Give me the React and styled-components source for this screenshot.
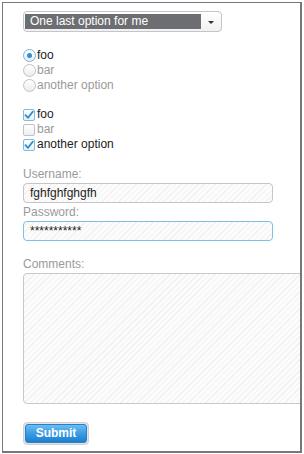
import React from "react";
import styled, { createGlobalStyle, css } from "styled-components";

const Global = createGlobalStyle`
  html, body { margin: 0; padding: 0; background: #fff; }
  body { font-family: "Liberation Sans", Arial, sans-serif; font-size: 12px; }
  * { box-sizing: border-box; }
`;

const Frame = styled.div`
  margin: 2px 0 0 2px;
  width: 300px;
  height: 451px;
  border: 1px solid #77777d;
  border-right-width: 2px;
  border-bottom-width: 2px;
  overflow: hidden;
  padding: 8px 0 0 20px;
  display: flex;
  flex-direction: column;
  align-items: flex-start;
`;

const stripes = css`
  background: repeating-linear-gradient(
    135deg,
    #fcfcfc 0px,
    #fcfcfc 3px,
    #f1f1f1 3px,
    #f1f1f1 4px
  );
`;

const Select = styled.div`
  width: 199px;
  height: 21px;
  border: 1px solid #c4c4c9;
  border-radius: 4px;
  background: linear-gradient(#ffffff, #f1f1f3);
  display: flex;
  align-items: stretch;
  padding: 2px 0 2px 1px;
`;

const SelectValue = styled.div`
  flex: 1;
  background: #6d6e72;
  color: #fff;
  font-size: 12px;
  line-height: 15px;
  padding-left: 5px;
  white-space: nowrap;
`;

const SelectArrow = styled.div`
  width: 20px;
  display: flex;
  align-items: center;
  justify-content: center;
  &::after {
    content: "";
    border-left: 3px solid transparent;
    border-right: 3px solid transparent;
    border-top: 3px solid #333;
    margin-top: 1px;
  }
`;

const Group = styled.div`
  display: flex;
  flex-direction: column;
  margin-top: ${(p) => p.$mt}px;
`;

const Option = styled.label`
  display: flex;
  align-items: center;
  height: 15px;
  line-height: 15px;
  font-size: 12px;
  color: ${(p) => (p.$dim ? "#9a9a9a" : "#222")};
  white-space: nowrap;
`;

const Radio = styled.span`
  width: 13px;
  height: 13px;
  border-radius: 50%;
  margin-right: 1px;
  border: 1px solid ${(p) => (p.$on ? "#72b6dd" : "#c2c2c6")};
  background: linear-gradient(#ffffff, #ececef);
  display: flex;
  align-items: center;
  justify-content: center;
  &::after {
    content: "";
    display: ${(p) => (p.$on ? "block" : "none")};
    width: 5px;
    height: 5px;
    border-radius: 50%;
    background: #2f8fd0;
  }
`;

const Check = styled.span`
  width: 12px;
  height: 12px;
  border-radius: 2px;
  margin-right: 2px;
  border: 1px solid ${(p) => (p.$on ? "#7dbde2" : "#c2c2c6")};
  background: linear-gradient(#ffffff, #eeeef1);
  display: flex;
  align-items: center;
  justify-content: center;
`;

const Tick = () => (
  <svg width="10" height="10" viewBox="0 0 10 10">
    <path d="M1.5 5.2 L4 7.8 L8.8 1.6" fill="none" stroke="#2c8ed0" strokeWidth="1.8" strokeLinecap="round" strokeLinejoin="round" />
  </svg>
);

const FieldLabel = styled.div`
  font-size: 12px;
  line-height: 18px;
  color: #9a9a9a;
  margin-top: ${(p) => p.$mt || 0}px;
`;

const TextInput = styled.div`
  width: 250px;
  height: 20px;
  border: 1px solid ${(p) => (p.$focus ? "#7cc0e2" : "#c4c4c9")};
  border-radius: 4px;
  ${stripes};
  padding-left: 6px;
  font-size: 12px;
  line-height: 18px;
  color: #222;
`;

const TextArea = styled.div`
  width: 300px;
  height: 131px;
  flex-shrink: 0;
  border: 1px solid #c8c8cd;
  border-radius: 4px;
  ${stripes};
`;

const SubmitButton = styled.button`
  margin-top: 18px;
  width: 66px;
  height: 23px;
  padding: 0;
  border: 1px solid #d0d0d4;
  border-radius: 4px;
  background: #e4e4e6;
  display: flex;
  align-items: stretch;
  justify-content: stretch;
  cursor: pointer;
  span {
    flex: 1;
    margin: 1px;
    border-radius: 3px;
    border: 1px solid #2a7fc0;
    background: linear-gradient(#6cbdf2 0%, #3e9fe6 45%, #1c7fcf 100%);
    color: #fff;
    font-family: "Liberation Sans", Arial, sans-serif;
    font-weight: bold;
    font-size: 12px;
    line-height: 17px;
    text-align: center;
  }
`;

export default function App() {
  return (
    <>
      <Global />
      <Frame>
        <Select>
          <SelectValue>One last option for me</SelectValue>
          <SelectArrow />
        </Select>

        <Group $mt={16}>
          <Option><Radio $on />foo</Option>
          <Option $dim><Radio />bar</Option>
          <Option $dim><Radio />another option</Option>
        </Group>

        <Group $mt={14}>
          <Option><Check $on><Tick /></Check>foo</Option>
          <Option $dim><Check />bar</Option>
          <Option><Check $on><Tick /></Check>another option</Option>
        </Group>

        <FieldLabel $mt={13}>Username:</FieldLabel>
        <TextInput>fghfghfghgfh</TextInput>
        <FieldLabel>Password:</FieldLabel>
        <TextInput $focus>***********</TextInput>

        <FieldLabel $mt={14}>Comments:</FieldLabel>
        <TextArea />

        <SubmitButton><span>Submit</span></SubmitButton>
      </Frame>
    </>
  );
}
